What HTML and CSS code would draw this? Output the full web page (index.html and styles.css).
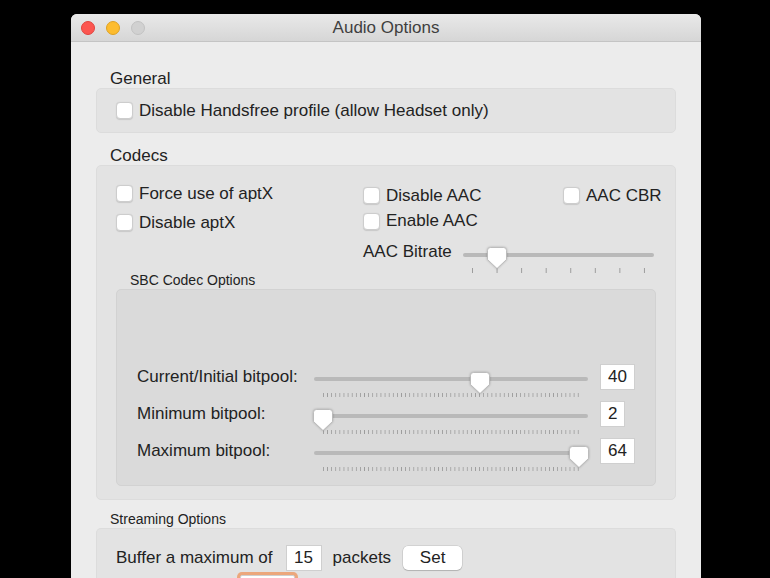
FILE: index.html
```html
<!DOCTYPE html>
<html>
<head>
<meta charset="utf-8">
<link rel="stylesheet" href="styles.css">
</head>
<body>
<div class="window">
  <div class="titlebar">
    <div class="lights">
      <span class="light red"></span>
      <span class="light yellow"></span>
      <span class="light gray"></span>
    </div>
    <div class="title">Audio Options</div>
    <div></div>
  </div>
  <div class="content">
    <div class="section-label">General</div>
    <div class="box general">
      <label class="check"><span class="cb"></span>Disable Handsfree profile (allow Headset only)</label>
    </div>

    <div class="section-label codecs-label">Codecs</div>
    <div class="box codecs">
      <div class="codec-top">
        <div class="col1">
          <label class="check row29"><span class="cb"></span>Force use of aptX</label>
          <label class="check row29"><span class="cb"></span>Disable aptX</label>
        </div>
        <div class="col2">
          <div class="row25 pair">
            <label class="check aac-left"><span class="cb"></span>Disable AAC</label>
            <label class="check"><span class="cb"></span>AAC CBR</label>
          </div>
          <label class="check row26"><span class="cb"></span>Enable AAC</label>
          <div class="bitrate-row">
            <span class="bitrate-label">AAC Bitrate</span>
            <div class="slider aac">
              <div class="track"></div>
              <div class="ticks aac-ticks"></div>
              <svg class="thumb" style="left:24px" width="20" height="22" viewBox="0 0 20 22"><path d="M3.5 0.5H16.5Q19.5 0.5 19.5 3.5V12.5L10 21.5L0.5 12.5V3.5Q0.5 0.5 3.5 0.5Z" fill="#fff" stroke="#b4b4b4" stroke-width="0.8"/></svg>
            </div>
          </div>
        </div>
      </div>

      <div class="sub-label">SBC Codec Options</div>
      <div class="sbc">
        <div class="sbc-row">
          <span class="sbc-label">Current/Initial bitpool:</span>
          <div class="slider sbc-slider">
            <div class="track"></div>
            <div class="ticks sbc-ticks"></div>
            <svg class="thumb" style="left:156px" width="20" height="22" viewBox="0 0 20 22"><path d="M3.5 0.5H16.5Q19.5 0.5 19.5 3.5V12.5L10 21.5L0.5 12.5V3.5Q0.5 0.5 3.5 0.5Z" fill="#fff" stroke="#b4b4b4" stroke-width="0.8"/></svg>
          </div>
          <span class="field">40</span>
        </div>
        <div class="sbc-row">
          <span class="sbc-label">Minimum bitpool:</span>
          <div class="slider sbc-slider">
            <div class="track"></div>
            <div class="ticks sbc-ticks"></div>
            <svg class="thumb" style="left:-1px" width="20" height="22" viewBox="0 0 20 22"><path d="M3.5 0.5H16.5Q19.5 0.5 19.5 3.5V12.5L10 21.5L0.5 12.5V3.5Q0.5 0.5 3.5 0.5Z" fill="#fff" stroke="#b4b4b4" stroke-width="0.8"/></svg>
          </div>
          <span class="field">2</span>
        </div>
        <div class="sbc-row">
          <span class="sbc-label">Maximum bitpool:</span>
          <div class="slider sbc-slider">
            <div class="track"></div>
            <div class="ticks sbc-ticks"></div>
            <svg class="thumb" style="left:255px" width="20" height="22" viewBox="0 0 20 22"><path d="M3.5 0.5H16.5Q19.5 0.5 19.5 3.5V12.5L10 21.5L0.5 12.5V3.5Q0.5 0.5 3.5 0.5Z" fill="#fff" stroke="#b4b4b4" stroke-width="0.8"/></svg>
          </div>
          <span class="field">64</span>
        </div>
      </div>
    </div>

    <div class="sub-label streaming-label">Streaming Options</div>
    <div class="box streaming">
      <div class="stream-row">
        <span class="buf-label">Buffer a maximum of</span>
        <span class="field wide">15</span>
        <span class="packets">packets</span>
        <span class="button">Set</span>
      </div>
      <div class="stream-row2">
        <span class="field focused"></span>
      </div>
    </div>
  </div>
</div>
</body>
</html>
```
FILE: styles.css
```css
html, body {
  margin: 0;
  padding: 0;
  background: #000;
  overflow: hidden;
  height: 578px;
}
body {
  font-family: "Liberation Sans", Arial, sans-serif;
  font-size: 17px;
  color: #222;
}
.window {
  margin-left: 71px;
  margin-top: 14px;
  width: 630px;
  height: 564px;
  background: #ececec;
  border-radius: 6px 6px 0 0;
  overflow: hidden;
}
.titlebar {
  height: 27px;
  border-bottom: 1px solid #c4c4c4;
  background: linear-gradient(#e9e9e9, #d6d6d6);
  display: grid;
  grid-template-columns: 1fr auto 1fr;
  align-items: center;
}
.lights {
  display: flex;
  gap: 11px;
  padding-left: 10px;
}
.light {
  width: 14px;
  height: 14px;
  border-radius: 50%;
  box-sizing: border-box;
}
.red { background: #fc5650; border: 1px solid #e0443e; }
.yellow { background: #fdbc2e; border: 1px solid #dea123; }
.gray { background: #d1d1d1; border: 1px solid #c2c2c2; }
.title {
  color: #3f3f3f;
  font-size: 17px;
  line-height: 20px;
  padding-top: 1px;
}
.content {
  padding: 0 25px;
}
.section-label {
  padding-left: 14px;
  line-height: 20px;
  padding-top: 1px;
  height: 19px;
  margin-top: 26px;
}
.codecs-label {
  margin-top: 12px;
}
.box {
  background: #e3e3e3;
  border: 1px solid #dcdcdc;
  border-radius: 5px;
}
.general {
  height: 43px;
  display: flex;
  align-items: center;
  padding-left: 19px;
}
.check {
  display: flex;
  align-items: center;
  gap: 6px;
  white-space: nowrap;
}
.cb {
  width: 17px;
  height: 17px;
  box-sizing: border-box;
  background: #fff;
  border: 1px solid #cdcdcd;
  border-radius: 4px;
  box-shadow: 0 0.5px 1px rgba(0,0,0,0.12);
  flex: none;
}
.codecs {
  height: 333px;
  padding: 0 19px;
}
.codec-top {
  display: flex;
}
.col1 {
  width: 247px;
  flex: none;
  padding-top: 13px;
}
.col2 {
  flex: 1;
  min-width: 0;
  padding-top: 17px;
}
.row29 { height: 29px; }
.row25 { height: 25px; }
.row26 { height: 26px; }
.pair { display: flex; align-items: center; }
.aac-left { width: 200px; flex: none; }
.bitrate-row {
  display: flex;
  height: 36px;
}
.bitrate-label {
  width: 100px;
  flex: none;
  line-height: 20px;
  margin-top: 8px;
  white-space: nowrap;
}
.slider {
  position: relative;
}
.track {
  height: 4px;
  border-radius: 2px;
  background: #b9b9b9;
}
.ticks {
  height: 5px;
  margin: 0 9px;
  background-image: linear-gradient(to right, #9c9c9c 1px, transparent 1px);
  background-repeat: repeat-x;
}
.aac {
  width: 191px;
  flex: none;
  padding-top: 19px;
}
.aac-ticks {
  margin-top: 11px;
  background-size: calc((100% - 1px) / 7) 100%;
}
.thumb {
  position: absolute;
  top: 13px;
  filter: drop-shadow(0 0.5px 0.8px rgba(0,0,0,0.25));
}
.sub-label {
  font-size: 14px;
  line-height: 18px;
  padding-left: 14px;
  margin-top: 1px;
}
.sbc {
  background: #dadada;
  border: 1px solid #d2d2d2;
  border-radius: 5px;
  height: 197px;
  box-sizing: border-box;
  padding: 66px 0 0 20px;
}
.sbc-row {
  display: grid;
  grid-template-columns: 165px 274px auto;
  column-gap: 12px;
  height: 37px;
  align-items: center;
}
.sbc-label {
  white-space: nowrap;
  line-height: 20px;
  margin-top: 1px;
}
.sbc-slider {
  align-self: start;
  padding-top: 21px;
}
.sbc-slider .thumb {
  top: 16px;
}
.sbc-ticks {
  margin-top: 12px;
  height: 4px;
  background-size: calc((100% - 1px) / 62) 100%;
}
.field {
  justify-self: start;
  background: #fff;
  border: 1px solid #cfcfcf;
  height: 26px;
  box-sizing: border-box;
  line-height: 24px;
  padding: 0 7px;
  text-align: center;
  min-width: 21px;
}
.streaming-label {
  margin-top: 10px;
}
.streaming {
  height: 60px;
  padding: 16px 0 0 19px;
  border-bottom: none;
  border-radius: 5px 5px 0 0;
}
.stream-row {
  display: flex;
  align-items: center;
  height: 26px;
}
.buf-label { margin-right: 13px; white-space: nowrap; }
.field.wide { width: 36px; padding: 0; }
.packets { margin-left: 11px; margin-right: 12px; }
.button {
  width: 59px;
  height: 24px;
  line-height: 24px;
  text-align: center;
  background: #fff;
  border-radius: 5px;
  box-shadow: 0 0 0 0.5px rgba(0,0,0,0.15), 0 1px 1px rgba(0,0,0,0.15);
}
.stream-row2 {
  padding-left: 121px;
  margin-top: 4px;
}
.field.focused {
  display: block;
  width: 55px;
  height: 24px;
  border-radius: 2px;
  box-shadow: 0 0 0 3px #eca77c;
  margin-left: 3px;
  margin-top: 3px;
}
```
